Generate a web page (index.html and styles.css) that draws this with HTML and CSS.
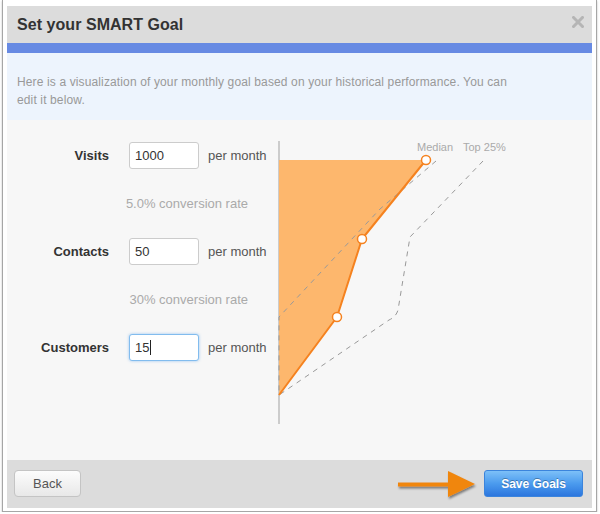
FILE: index.html
```html
<!DOCTYPE html>
<html>
<head>
<meta charset="utf-8">
<link rel="stylesheet" href="styles.css">
</head>
<body>
<div class="frame">
  <div class="dialog">
    <div class="header">
      <h1 class="title">Set your SMART Goal</h1>
      <svg class="close" width="12" height="12" viewBox="0 0 12 12"><path d="M1.5 1.5 L10.5 10.5 M10.5 1.5 L1.5 10.5" stroke="#b5b5b5" stroke-width="3" stroke-linecap="square"/></svg>
    </div>
    <div class="bluebar"></div>
    <div class="info">Here is a visualization of your monthly goal based on your historical performance. You can edit it below.</div>
    <div class="body">
      <div class="form">
        <div class="row">
          <div class="label">Visits</div>
          <div class="field">1000</div>
          <div class="unit">per month</div>
        </div>
        <div class="conv">5.0% conversion rate</div>
        <div class="row">
          <div class="label">Contacts</div>
          <div class="field">50</div>
          <div class="unit">per month</div>
        </div>
        <div class="conv">30% conversion rate</div>
        <div class="row">
          <div class="label">Customers</div>
          <div class="field focus">15<span class="caret"></span></div>
          <div class="unit">per month</div>
        </div>
      </div>
      <svg class="chart" width="322" height="340" viewBox="0 0 322 340">
        <line x1="9" y1="21" x2="9" y2="304" stroke="#cccccc" stroke-width="2"/>
        <polygon points="9,40 156,40 92,119 67,197 9,275" fill="#fdb76d"/>
        <path d="M166,41 L110,89 L9,197 L9,275" fill="none" stroke="#999" stroke-width="1" stroke-dasharray="5,5"/>
        <path d="M213,41 L140,117 L128,190 Q126,197 119,200 L9,275" fill="none" stroke="#999" stroke-width="1" stroke-dasharray="5,5"/>
        <polyline points="9,275 67,197 92,119 156,40" fill="none" stroke="#f5821f" stroke-width="2" stroke-linejoin="round"/>
        <circle cx="156" cy="40" r="4.5" fill="#fff" stroke="#f5821f" stroke-width="1.5"/>
        <circle cx="92" cy="119" r="4.5" fill="#fff" stroke="#f5821f" stroke-width="1.5"/>
        <circle cx="67" cy="197" r="4.5" fill="#fff" stroke="#f5821f" stroke-width="1.5"/>
        <text x="147" y="31" class="legend">Median</text>
        <text x="193" y="31" class="legend">Top 25%</text>
      </svg>
    </div>
    <div class="footer">
      <button class="btn back">Back</button>
      <svg class="arrow" width="84" height="32" viewBox="0 0 84 32">
        <defs>
          <filter id="sh" x="-20%" y="-30%" width="140%" height="170%">
            <feDropShadow dx="1" dy="2" stdDeviation="1.2" flood-color="#000" flood-opacity="0.45"/>
          </filter>
        </defs>
        <path d="M3,13.5 L53,13.5 L53,2 L80,15 L53,28 L53,17.5 L3,17.5 Z" fill="#f0860f" filter="url(#sh)"/>
      </svg>
      <button class="btn save">Save Goals</button>
    </div>
  </div>
</div>
</body>
</html>
```
FILE: styles.css
```css
html, body {
  margin: 0;
  padding: 0;
  background: #ffffff;
}
body {
  font-family: "Liberation Sans", Arial, sans-serif;
}
.frame {
  margin-left: 2px;
  width: 585px;
  padding: 6px 4px 3px 4px;
  border-left: 1px solid #a6a6a6;
  border-right: 1px solid #a6a6a6;
  border-bottom: 1px solid #a6a6a6;
  box-shadow: 0 1px 2px rgba(0,0,0,0.25);
  background: #fff;
}
.dialog {
  width: 585px;
  height: 502px;
  display: flex;
  flex-direction: column;
  background: #f7f7f7;
}
.header {
  height: 37px;
  background: #dcdcdc;
  display: flex;
  align-items: center;
  justify-content: space-between;
  padding: 0 8px 0 10px;
}
.title {
  margin: 0;
  font-size: 16px;
  font-weight: bold;
  color: #333333;
  letter-spacing: 0.05px;
}
.close {
  margin-top: -6px;
}
.bluebar {
  height: 10px;
  background: #678ae3;
}
.info {
  height: 67px;
  box-sizing: border-box;
  background: #edf4fd;
  padding: 20px 70px 0 10px;
  font-size: 12px;
  line-height: 18px;
  color: #999999;
  letter-spacing: 0.13px;
}
.body {
  height: 340px;
  display: flex;
}
.form {
  width: 263px;
  padding-top: 22px;
  display: flex;
  flex-direction: column;
}
.row {
  display: flex;
  align-items: center;
  height: 27px;
}
.label {
  width: 102px;
  text-align: right;
  font-size: 13px;
  font-weight: bold;
  color: #333333;
}
.field {
  margin-left: 20px;
  width: 70px;
  height: 27px;
  box-sizing: border-box;
  border: 1px solid #cccccc;
  border-radius: 3px;
  background: #ffffff;
  font-size: 13px;
  color: #333333;
  line-height: 25px;
  padding-left: 5px;
}
.field.focus {
  border-color: #82bcee;
  box-shadow: 0 0 3px rgba(90,165,240,0.6);
}
.caret {
  display: inline-block;
  width: 1px;
  height: 15px;
  background: #222;
  vertical-align: -3px;
  margin-left: 1px;
}
.unit {
  margin-left: 9px;
  font-size: 13px;
  color: #555555;
}
.conv {
  margin: 28px 0 27px 0;
  height: 14px;
  line-height: 14px;
  text-align: right;
  padding-right: 22px;
  font-size: 13px;
  color: #aaaaaa;
}
.chart {
  display: block;
}
.legend {
  font-family: "Liberation Sans", Arial, sans-serif;
  font-size: 11px;
  fill: #aaaaaa;
}
.footer {
  height: 48px;
  background: #dcdcdc;
  display: flex;
  align-items: flex-start;
  padding: 10px 9px 0 7px;
  box-sizing: border-box;
}
.btn {
  height: 27px;
  box-sizing: border-box;
  font-family: "Liberation Sans", Arial, sans-serif;
  padding: 0;
  cursor: pointer;
}
.back {
  width: 67px;
  border: 1px solid #c4c4c4;
  border-radius: 4px;
  background: linear-gradient(#fcfcfc, #e8e8e8);
  font-size: 13px;
  color: #555555;
}
.arrow {
  margin-left: auto;
  margin-right: 5px;
  margin-top: -1px;
}
.save {
  width: 99px;
  border: 1px solid #3b84dc;
  border-radius: 3px;
  background: linear-gradient(#7dc0f8, #4b9bee 50%, #2c76de);
  font-size: 12px;
  font-weight: bold;
  color: #ffffff;
  text-shadow: 0 -1px 0 rgba(0,0,0,0.3);
}
```
